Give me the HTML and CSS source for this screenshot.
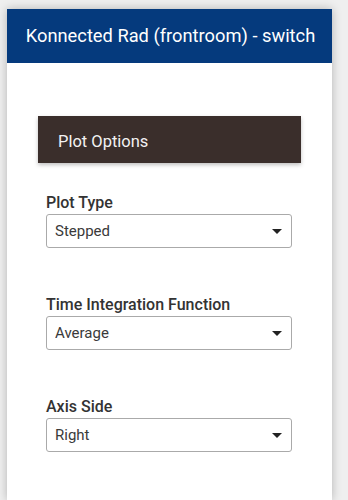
FILE: index.html
```
<!DOCTYPE html>
<html lang="en">
<head>
    <meta charset="UTF-8">
    <meta name="viewport" content="width=device-width, initial-scale=1.0">
    <title>Konnected Rad (frontroom) - switch</title>
    <link rel="stylesheet" href="styles.css">
</head>

<body>
    <div class="panel">
        <!-- Header -->
        <div class="panel-header">Konnected Rad (frontroom) - switch</div>

        <div class="panel-body">
            <div class="section-title">Plot Options</div>

            <div class="field">
                <label for="plot-type">Plot Type</label>
                <div class="select-wrap">
                    <select id="plot-type">
                        <option>Stepped</option>
                        <option>Line</option>
                    </select>
                </div>
            </div>

            <div class="field">
                <label for="time-function">Time Integration Function</label>
                <div class="select-wrap">
                    <select id="time-function">
                        <option>Average</option>
                        <option>Maximum</option>
                        <option>Minimum</option>
                    </select>
                </div>
            </div>

            <div class="field">
                <label for="axis-side">Axis Side</label>
                <div class="select-wrap">
                    <select id="axis-side">
                        <option>Right</option>
                        <option>Left</option>
                    </select>
                </div>
            </div>
        </div>
    </div>
</body>

</html>
```
FILE: styles.css
```
/* Basic styling for the page */
body {
    font-family: Roboto, 'Noto Sans', sans-serif;
    background-color: #efefef;
    margin: 0;
    padding: 0;
    color: #333;
}

.panel {
    width: 325px;
    min-height: 491px;
    margin: 9px 0 0 7px;
    background-color: white;
    box-shadow: 0 0 9px rgba(0, 0, 0, 0.25);
}

.panel-header {
    height: 54px;
    background-color: #053a7d;
    color: white;
    font-size: 18.3px;
    line-height: 54px;
    text-align: center;
    padding-left: 2px;
}

.panel-body {
    padding: 53px 31px 0 31px;
}

.section-title {
    box-sizing: border-box;
    height: 47px;
    line-height: 42px;
    padding: 5px 0 0 20px;
    background-color: #3a2e2b;
    color: #f2f2f2;
    font-size: 16.5px;
    box-shadow: 0 2px 4px rgba(0, 0, 0, 0.25);
    margin-bottom: 30px;
}

.field {
    margin: 0 9px 47px 8px;
}

.field label {
    display: block;
    font-size: 16px;
    font-weight: 500;
    line-height: 19px;
    margin-bottom: 2px;
    color: #333;
}

.select-wrap {
    position: relative;
}

.select-wrap select {
    appearance: none;
    -webkit-appearance: none;
    width: 100%;
    height: 34px;
    padding: 0 0 0 8px;
    border: 1px solid #aaa;
    border-radius: 3px;
    background-color: white;
    font-family: Roboto, 'Noto Sans', sans-serif;
    font-size: 15px;
    color: #3a3a3a;
}

/* caret */
.select-wrap::after {
    content: "";
    position: absolute;
    right: 10px;
    top: 15px;
    border-left: 5px solid transparent;
    border-right: 5px solid transparent;
    border-top: 5px solid #222;
}
```
